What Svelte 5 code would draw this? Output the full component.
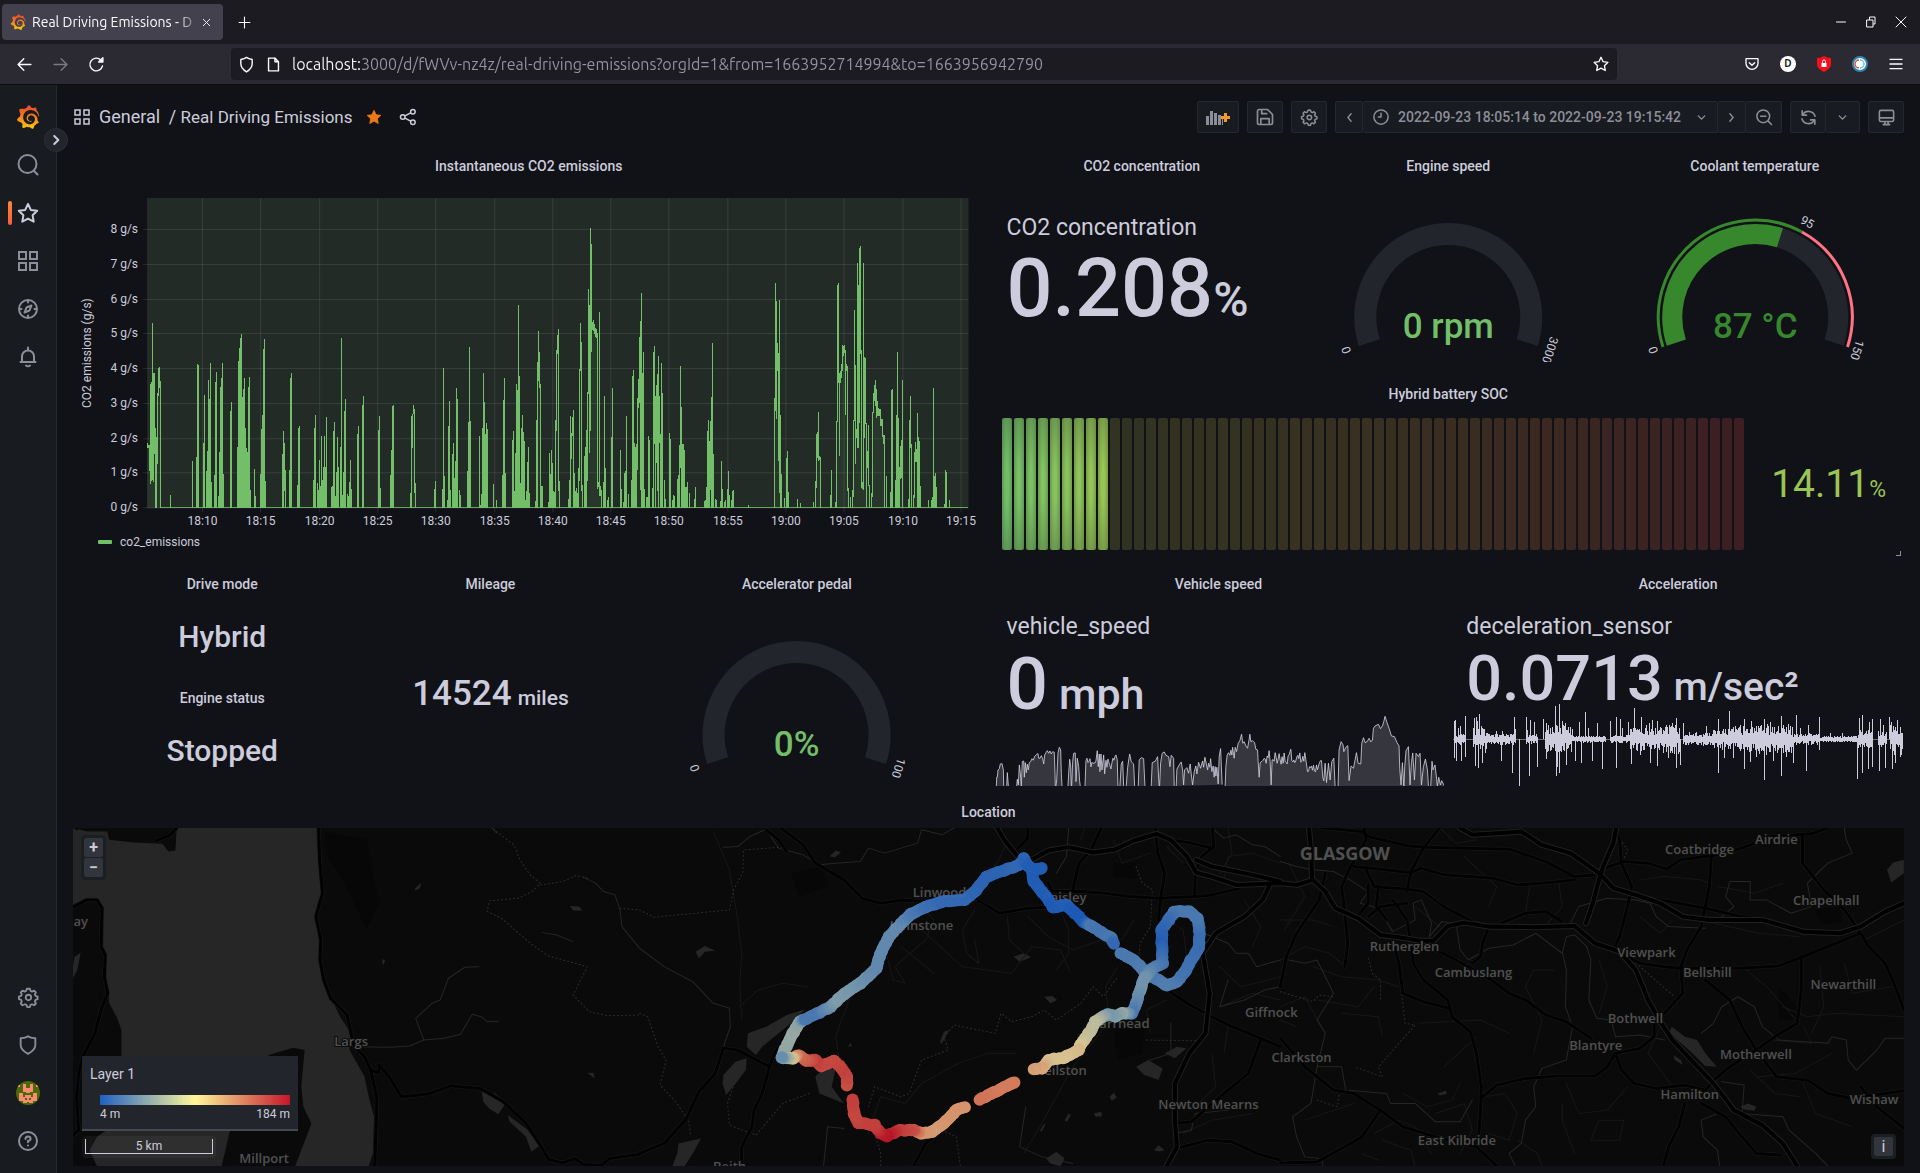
<script>
  const logoPath =
    'M23.02 10.59a8.578 8.578 0 0 0-.862-3.034 8.911 8.911 0 0 0-1.789-2.445c.337-1.342-.413-2.505-.413-2.505-1.292-.08-2.113.4-2.416.62-.052-.02-.102-.044-.154-.064-.22-.089-.446-.172-.677-.247-.231-.073-.47-.14-.711-.197a9.867 9.867 0 0 0-.875-.161C14.557.753 12.94 0 12.94 0c-1.804 1.145-2.147 2.744-2.147 2.744l-.018.093c-.098.029-.2.057-.298.088-.138.042-.275.094-.413.143-.138.055-.275.107-.41.166a8.869 8.869 0 0 0-1.557.87l-.063-.029c-2.497-.955-4.716.195-4.716.195-.203 2.658.996 4.33 1.235 4.636a11.608 11.608 0 0 0-.607 2.635C1.636 12.677.953 15.014.953 15.014c1.926 2.214 4.171 2.351 4.171 2.351.003-.002.006-.002.006-.005.285.509.615.994.986 1.446.156.19.32.371.488.548-.704 2.009.099 3.68.099 3.68 2.144.08 3.553-.937 3.849-1.173a9.784 9.784 0 0 0 3.164.501h.08l.055-.003.107-.002.103-.005.003.002c1.01 1.44 2.788 1.646 2.788 1.646 1.264-1.332 1.337-2.653 1.337-2.94v-.058c0-.02-.003-.039-.003-.06.265-.187.52-.387.758-.6a7.875 7.875 0 0 0 1.415-1.7c1.43.083 2.437-.885 2.437-.885-.236-1.49-1.085-2.216-1.264-2.354l-.018-.013-.016-.013a.217.217 0 0 1-.031-.02c.008-.092.016-.18.02-.27.011-.162.016-.323.016-.48v-.253l-.005-.098-.008-.135a1.891 1.891 0 0 0-.01-.13c-.003-.042-.008-.083-.013-.125l-.016-.124-.018-.122a6.215 6.215 0 0 0-2.032-3.73 6.015 6.015 0 0 0-3.222-1.46 6.292 6.292 0 0 0-.85-.048l-.107.002h-.063l-.044.003-.104.008a4.777 4.777 0 0 0-3.335 1.695c-.332.4-.592.84-.768 1.297a4.594 4.594 0 0 0-.312 1.817l.003.091c.005.055.007.11.013.164a3.615 3.615 0 0 0 .698 1.82 3.53 3.53 0 0 0 1.827 1.282c.33.098.66.14.971.137.039 0 .078 0 .114-.002l.063-.003c.02 0 .041-.003.062-.003.034-.002.065-.007.099-.01.007 0 .018-.003.028-.003l.031-.005.06-.008a1.18 1.18 0 0 0 .112-.02c.036-.008.072-.013.109-.024a2.634 2.634 0 0 0 .914-.415c.028-.02.056-.041.085-.065a.248.248 0 0 0 .039-.35.244.244 0 0 0-.309-.06l-.078.042c-.09.044-.184.083-.283.116a2.476 2.476 0 0 1-.475.096c-.028.003-.054.006-.083.006l-.083.002c-.026 0-.054 0-.08-.002l-.102-.006h-.012l-.024.006c-.016-.003-.031-.003-.044-.006-.031-.002-.06-.007-.091-.01a2.59 2.59 0 0 1-.724-.213 2.557 2.557 0 0 1-.667-.438 2.52 2.52 0 0 1-.805-1.475 2.306 2.306 0 0 1-.029-.444l.006-.122v-.023l.002-.031c.003-.021.003-.04.005-.06a3.163 3.163 0 0 1 1.352-2.29 3.12 3.12 0 0 1 .937-.43 2.946 2.946 0 0 1 .776-.101h.06l.07.002.045.003h.026l.07.005a4.041 4.041 0 0 1 1.635.49 3.94 3.94 0 0 1 1.602 1.662 3.77 3.77 0 0 1 .397 1.414l.005.076.003.075c.002.026.002.05.002.075 0 .024.003.052 0 .07v.065l-.002.073-.008.174a6.195 6.195 0 0 1-.08.639 5.1 5.1 0 0 1-.267.927 5.31 5.31 0 0 1-.624 1.13 5.052 5.052 0 0 1-3.237 2.014 4.82 4.82 0 0 1-.649.066l-.039.003h-.287a6.607 6.607 0 0 1-1.716-.265 6.776 6.776 0 0 1-3.4-2.274 6.75 6.75 0 0 1-.746-1.15 6.616 6.616 0 0 1-.714-2.596l-.005-.083-.002-.02v-.056l-.003-.073v-.096l-.003-.104v-.07l.003-.163c.008-.22.026-.45.054-.678a8.707 8.707 0 0 1 .28-1.355c.128-.444.286-.872.473-1.277a7.04 7.04 0 0 1 1.456-2.1 5.925 5.925 0 0 1 .953-.763c.169-.111.343-.213.524-.306.089-.05.182-.091.273-.135.047-.02.093-.042.138-.062a7.177 7.177 0 0 1 .714-.267l.145-.045c.049-.015.098-.026.148-.041.098-.029.197-.052.296-.076.049-.013.1-.02.15-.033l.15-.032.151-.028.076-.013.075-.01.153-.024c.057-.01.114-.013.171-.023l.169-.021c.036-.003.073-.008.106-.01l.073-.008.036-.003.042-.002c.057-.003.114-.008.171-.01l.086-.006h.023l.037-.003.145-.007a7.999 7.999 0 0 1 1.708.125 7.917 7.917 0 0 1 2.048.68 8.253 8.253 0 0 1 1.672 1.09l.09.077.089.078c.06.052.114.107.171.159.057.052.112.106.166.16.052.055.107.107.159.164a8.671 8.671 0 0 1 1.41 1.978c.012.026.028.052.04.078l.04.078.075.156c.023.051.05.1.07.153l.065.15a8.848 8.848 0 0 1 .45 1.34.19.19 0 0 0 .201.142.186.186 0 0 0 .172-.184c.01-.246.002-.532-.024-.856z';

  const gearPath =
    'M12 2.8l2 .2.8 2.4 1.6.7 2.3-1.1 1.9 1.9-1.1 2.3.7 1.6 2.3.8v2.8l-2.3.8-.7 1.6 1.1 2.3-1.9 1.9-2.3-1.1-1.6.7-.8 2.4h-2.9l-.8-2.4-1.6-.7L6 21l-1.9-1.9 1.1-2.3-.7-1.6-2.4-.8v-2.8l2.4-.8.7-1.6L4.100 6.900 6 5l2.300 1.100 1.600-.700.800-2.400z';

  const starPath = 'M12 3l2.8 5.900 6.400.900-4.600 4.500 1.100 6.400L12 17.600l-5.700 3.100 1.100-6.400L2.800 9.800l6.400-.900z';
  const shieldPath = 'M12 2.500c2.400 1.700 4.900 2.300 8 2v7.500c0 4.200-3.400 7.200-8 9.700-4.600-2.500-8-5.500-8-9.700V4.500c3.100.300 5.600-.300 8-2z';

  // CO2 emissions, one entry per pixel column: x, top and (optionally) bottom, in thirds of a pixel.
  const early = `232 790 800,235 795 800,238 795 870,241 612 908,244 606 900,247 430 898,250 580 902,253 580 820,256 745,259 772,262 640 850,265 565 645,268 562 620,271 603,301 945,367 843,380 830,383 552,386 555,400 790,403 645,410 873,413 813,416 600,419 657,421 549,424 906,433 885,436 606,439 577,446 948,449 815,452 622,455 594,458 549,460 882,481 693,484 667,502 802,505 543,508 505,511 475,514 462,517 650,520 627,523 594,526 745,529 804,532 815,535 620,538 591,541 930,553 867,556 948,572 882,574 748,577 705,580 507,583 478,586 904,638 822,641 753,644 790 930,646 870,658 870,661 595,664 580,683 915,686 745,689 738,730 900,733 744,736 705,742 910,745 930,748 840,751 918,754 768,757 900,760 860,763 768,766 861,769 711,784 921,787 918,790 753,793 727,797 948,799 876,802 771,805 861,811 802,814 475,817 946,820 876,823 694,826 657,832 942,835 948,838 907,841 840,844 928,862 762,865 738,877 675,880 648,925 750,928 708,931 925,961 885,964 811,967 678,970 675,1022 940,1024 708,1027 702 800,1030 675 700,1033 687 935,1036 910,1093 927,1096 904,1117 927,1120 565,1123 888,1132 960,1135 738,1138 663,1141 930,1147 822,1150 790,1153 894,1156 843,1159 625,1162 657,1168 930,1171 946,1192 873,1195 727,1198 502,1201 724,1228 769,1231 975,1234 942,1237 744,1240 579,1243 667,1246 762,1249 730,1252 747,1270 912,1279 960,1297 885,1300 660,1303 594,1306 880,1327 780,1330 753,1333 934,1336 820,1339 612,1342 630,1345 375,1348 588,1351 910,1354 745,1357 705,1360 757,1363 784,1366 960,1369 934,1372 846,1375 802,1378 940,1396 963,1399 720,1402 545,1405 454 600,1408 517 620,1411 612,1414 918,1417 918`;
  const late = `25 966,28 820,31 882,34 810,37 850,40 934,43 936,47 720,49 510 750,52 465 520,55 448 930,58 904,85 958,88 900,91 708,94 760 835,97 710 765,100 690,103 880,106 933,109 924,112 940,115 864,118 568 900,121 430 570,124 487 930,127 915,133 828,136 800,139 750,142 637 900,145 327 640,148 375 815,151 144 750,154 192 512,157 427 447,160 421 449,163 432 460,166 443 468,169 448 472,172 460 925,175 906 918,178 397 945,181 918 945,184 930,190 906,193 648,196 864,202 960,205 951,214 772,217 624,241 810,244 928,250 965,253 878,256 873,259 708,265 942,274 900,277 588,280 570,283 790,286 800,289 792,292 655 868,295 597 680,298 470 665,301 424 928,304 340,307 580,310 517,313 928,319 951,322 951,325 768,328 780,337 925,340 515,343 498 790,346 648,349 615 845,352 583 930,355 528,358 648 785,361 762,364 549,367 640,373 900,376 957,388 760,391 777,397 960,400 945,403 948,412 897,415 885,418 795,421 558 862,424 680,427 793,430 793,433 810,436 920,439 920,442 906,448 940,463 958,466 921,493 963,496 960,499 921,502 752,505 720,508 784,511 722 928,514 652,517 490,520 823,526 957,529 960,541 963,544 843,547 927,553 966,556 960,562 928,565 873,568 945,574 960,577 934,580 930,625 975,703 655,706 309 690,709 362 715,712 490 570,715 520 840,718 360 935,721 705,724 882,733 954,739 835,742 813,745 936,772 957,781 970,820 966,826 903,829 762 920,832 757 830,835 697 840,838 828 838,841 832,871 945,874 870,886 966,889 724,892 316 724,895 309 605,898 580 825,901 574 605,904 552 590,907 495 570,910 498 525,913 495 515,916 510 703,919 552 570,922 558 930,925 925,931 951,937 930,940 720 948,943 390 720,946 555 850,949 747 770,952 249 802,955 316 800,958 204 725,961 198 520,964 510 922,967 906 925,970 249 928,973 532 772,976 535 730,979 730,982 813 860,985 735 915,988 915,994 940,997 695 948,1000 640 697,1003 615 660,1006 600 675,1009 628 712,1012 663 705,1015 685 705,1018 688 705,1021 688 735,1024 718 735,1027 718 767,1030 765 790,1033 766,1039 888,1051 936,1054 630,1057 627,1066 900,1069 705,1072 517,1075 714,1078 861,1081 798 895,1084 780 890,1087 600,1105 958,1108 720,1111 648 800,1114 793,1120 945,1123 816 950,1126 786 843,1129 808 843,1132 700,1135 772,1138 784,1141 918,1165 960,1174 960,1177 950,1180 625,1183 888,1186 880,1189 921,1213 972,1216 870,1219 876,1228 961`;

  const columns = [[early, 70], [late, 540]].flatMap(([text, origin]) =>
    text.split(',').map((entry) => {
      const [x, top, bottom = 982] = entry.trim().split(' ').map(Number);
      return { x: Math.floor(x / 3 + origin), top: Math.round(180 + top / 3), bottom: Math.round(180 + bottom / 3) };
    })
  );
  const emissionPath = columns.map((c) => `M${c.x + 0.5} ${c.top}V${c.bottom + 1}`).join('');
  const emissionFill = columns
    .slice(1)
    .map((c, i) => ({ a: columns[i], c }))
    .filter(({ a, c }) => c.x - a.x < 3)
    .map(({ a, c }) => `M${a.x} ${a.bottom}L${c.x + 1} ${c.bottom}V508H${a.x}z`)
    .join('');

  const yTicks = [0, 1, 2, 3, 4, 5, 6, 7, 8].map((v) => ({ label: `${v} g/s`, y: Math.round(507 - v * 34.75) + 0.5 }));
  const xTicks = ['18:10', '18:15', '18:20', '18:25', '18:30', '18:35', '18:40', '18:45', '18:50', '18:55', '19:00', '19:05', '19:10', '19:15']
    .map((label, i) => ({ label, x: Math.round(202 + i * 58.3) + 0.5 }));

  // Small seeded generator, so that jitter is the same on each load.
  let seed = 11;
  const random = () => ((seed = (seed * 16807) % 2147483647) / 2147483647);

  const jitter = (from, to, step, base, amp) => {
    const out = [];
    for (let x = from; x <= to; x += step) out.push(x, Math.round(base + (random() * 2 - 1) * amp));
    return out.join(' ');
  };
  const speedRuns = [
    '31 288 32 262 34 262 36 240 40 236 43 222 48 221 52 240 53 288',
    '62 288 64 248 67 288',
    '92 288 94 268 97 285 100 225 103 250 106 288 109 215 113 213 115 262 118 218 121 248 124 223 127 240 130 218 134 215 138 206 142 211 146 199 152 193 156 191 158 205 162 205 166 197 170 206 173 222 176 195 180 188 184 182 188 190 192 183 196 192 200 185 205 187 207 250 208 288',
    '210 288 212 270 216 190 220 172 224 180 226 250 228 288',
    '246 288 248 250 251 208 254 230 256 288',
    '257 288 260 215 263 190 268 189 270 275 274 205 278 230 281 275 283 288',
    `297 288 300 212 ${jitter(303, 331, 3, 220, 15)} 334 182 337 230 340 192 342 245 345 192 348 240 353 195 356 252 ${jitter(360, 384, 3, 223, 22)} 387 200 390 195 394 210 396 288`,
    '402 288 406 222 410 214 413 288',
    '421 288 425 232 431 192 436 215 443 222 446 288',
    '457 288 460 210 466 203 473 206 477 288',
    '496 288 499 218 508 214 515 200 518 265 520 288',
    '521 288 524 218 529 190 535 186 540 196 548 200 552 230 556 196 563 205 565 288',
    '571 288 573 238 580 225 586 216 590 240 593 285 596 240 603 233 608 250 613 222 617 262 620 285 625 245 630 228 633 252 638 217 644 235 650 213 653 232 657 202 662 225 665 240 668 220 672 232 674 206 678 245 682 228 685 262 688 230 690 258 693 232 697 282 700 200 704 176 709 284',
    `718 288 720 230 724 195 728 188 732 196 735 181 738 195 740 172 745 205 748 172 752 185 757 160 762 152 767 133 771 160 775 155 780 168 785 175 790 148 792 133 795 155 800 152 806 158 810 178 815 180 817 215 820 262 ${jitter(823, 847, 3, 212, 14)} 850 182 853 215 856 285 859 210 ${jitter(862, 912, 3, 206, 18)} 915 178 ${jitter(918, 960, 3, 203, 15)} 965 245 ${jitter(968, 1008, 3, 228, 18)} 1011 262 1014 273 1018 220 1022 278 1028 220 1033 270 1038 215 1044 205 1048 288`,
    '1057 288 1060 180 1066 155 1072 165 1074 185 1080 172 1086 167 1090 272 1096 228 1103 235 1112 188 1117 220 1125 222 1128 160 1133 143 1138 158 1144 155 1150 145 1155 156 1160 150 1163 115 1168 108 1178 103 1184 116 1190 108 1194 95 1198 79 1204 98 1210 115 1217 138 1226 140 1234 158 1240 168 1242 235 1246 285 1250 218 1254 288',
    '1255 288 1257 230 1261 182 1268 170 1273 285 1277 218 1281 189 1286 270 1291 190 1298 200 1303 190 1307 285 1313 230 1319 207 1325 240 1328 288',
    '1335 288 1339 214 1342 240 1348 225 1355 288 1359 262 1364 285 1368 272 1376 288'
  ];
  const speedPath = speedRuns
    .map((run) => {
      const n = run.split(' ').map(Number);
      let d = '';
      for (let i = 0; i < n.length; i += 2) d += `${i ? 'L' : 'M'}${(985 + n[i] / 3).toFixed(1)} ${(690 + n[i + 1] / 3).toFixed(1)}`;
      return d;
    })
    .join('');

  const brakeUp = '13 92 16 90 26 115 32 108 45 78 73 85 78 82 82 92 87 72 93 108 98 115 104 118 120 138 140 122 157 122 180 138 192 80 197 118 228 80 233 120 240 90 254 97 281 88 288 100 295 105 308 110 315 48 327 42 338 92 347 100 355 112 366 118 387 96 405 66 416 115 441 98 480 94 500 80 510 88 518 115 536 96 552 54 560 120 575 80 590 105 597 98 608 90 622 92 635 115 658 108 668 100 680 85 700 98 740 125 770 108 804 86 838 64 850 110 870 105 882 88 905 92 925 108 942 86 962 95 995 78 1010 112 1038 76 1050 115 1075 105 1107 80 1140 130 1178 128 1228 85 1238 76 1258 95 1268 86 1292 86 1300 105 1318 80 1325 95 1342 90 1352 112 1357 130';
  const brakeDown = '14 205 18 212 34 212 47 200 76 228 85 235 97 220 107 190 155 212 188 250 207 287 237 258 262 232 290 208 318 258 323 230 329 250 350 225 375 213 394 218 428 212 456 238 498 235 545 222 570 195 600 220 621 228 655 205 678 235 690 225 804 250 822 205 850 205 882 238 900 215 920 200 942 270 970 212 993 258 1010 200 1030 218 1070 242 1107 180 1223 267 1236 248 1255 238 1268 232 1287 242 1307 235 1326 237 1336 218 1352 200 1357 178';
  const brakeNoise = [[13, 48, 16], [70, 110, 36], [110, 200, 18], [228, 262, 14], [285, 365, 44], [365, 470, 9], [480, 540, 12], [540, 640, 38], [640, 690, 48], [700, 790, 20], [790, 850, 34], [850, 920, 42], [920, 1030, 50], [1030, 1107, 18], [1107, 1222, 8], [1225, 1270, 28], [1285, 1310, 26], [1322, 1358, 52]];
  const brakeBits = [];
  for (const list of [brakeUp, brakeDown]) {
    const n = list.split(' ').map(Number);
    for (let i = 0; i < n.length; i += 2) brakeBits.push([n[i], 147, n[i + 1]]);
  }
  for (const [from, to, amp] of brakeNoise)
    for (let x = from; x < to; x += 3) brakeBits.push([x, 145 - amp * (0.2 + 0.7 * random()), 150 + amp * (0.2 + 0.7 * random())]);
  const brakePath = brakeBits
    .map(([x, a, b]) => `M${Math.floor(1450 + x / 3) + 0.5} ${(690 + a / 3).toFixed(1)}V${(690 + b / 3).toFixed(1)}`)
    .join('');

  // Arc between two dial angles, measured in degrees clockwise from the top.
  const arc = (from, to, r) => {
    const at = (deg) => {
      const a = (deg * Math.PI) / 180;
      return `${(Math.sin(a) * r).toFixed(2)} ${(-Math.cos(a) * r).toFixed(2)}`;
    };
    return `M${at(from)}A${r} ${r} 0 ${to - from > 180 ? 1 : 0} 1 ${at(to)}`;
  };

  const mix = (stops, t) => {
    const f = Math.min(0.9999, Math.max(0, t)) * (stops.length - 1);
    const i = Math.floor(f);
    return stops[i].map((c, k) => Math.round(c + (stops[i + 1][k] - c) * (f - i))).join(',');
  };
  const cells = Array.from({ length: 62 }, (_, i) => {
    const lit = i < 9;
    const colour = lit
      ? mix([[115, 191, 105], [152, 198, 84]], i / 8)
      : mix([[45, 54, 37], [51, 50, 33], [56, 48, 33], [58, 40, 33], [60, 30, 35]], i / 61);
    return { lit, colour: `rgb(${colour})` };
  });

  // Map sheets: three survey sheets side by side, each with its own grid.
  const px = (sheet, x) => sheet * 640 + x / 2.45 - 74;
  const py = (y) => y / 3 - 8;
  const geo = (sheet, text) => {
    const n = text.split(' ').map(Number);
    let d = '';
    for (let i = 0; i < n.length; i += 2) d += `${i ? 'L' : 'M'}${px(sheet, n[i]).toFixed(1)} ${py(n[i + 1]).toFixed(1)}`;
    return d;
  };

  const water = [
    [0, '181 24 200 30 215 35 265 35 270 60 330 68 400 72 415 95 432 92 435 24 780 24 785 120 792 220 775 290 788 360 788 420 800 490 815 540 835 590 862 640 858 690 895 770 905 830 918 890 915 1000 905 1038 240 1038 222 990 240 950 300 900 300 630 288 590 270 550 268 520 258 460 262 400 255 390 255 260 240 238 215 235 181 255'],
    [0, '181 440 185 410 200 398 192 450 181 475'],
    [0, '1182 815 1215 820 1240 850 1222 882 1200 865 1185 845'], [0, '1245 885 1290 925 1325 975 1303 995 1290 950 1250 905'],
    [0, '1398 258 1420 260 1428 272 1405 272'], [0, '1018 205 1035 188 1030 205 1020 212'], [0, '938 418 945 420 942 434 938 430'], [0, '1440 758 1455 758 1458 775'],
    [1, '265 640 310 620 360 585 405 568 370 610 330 650 300 680 285 705 262 680'], [1, '205 765 235 725 262 715 260 750 235 790 212 825 203 790'],
    [1, '95 970 150 955 130 1000 110 1038 80 1038 92 1000'], [1, '430 770 450 745 480 745 470 800 500 850 470 835 440 820'],
    [1, '137 395 160 378 185 392 160 395 145 415'], [1, '465 110 480 92 493 98 478 112'], [1, '915 410 940 400 958 412 930 425'], [1, '990 530 1010 528 1022 540 1005 550'],
    [1, '735 665 745 635 757 630 745 660 738 672'], [1, '1215 740 1245 720 1280 745 1270 780 1235 765'], [1, '1285 700 1315 680 1338 685 1310 715'],
    [1, '995 1015 1020 995 1040 1015 1030 1038 1005 1030'], [1, '1150 830 1160 818 1168 832 1155 842'], [1, '510 680 516 668 520 678'], [1, '1112 880 1130 875 1132 888 1116 890'],
    [1, '1040 900 1050 880 1055 885 1046 905'], [1, '980 930 990 910 992 915 984 935'], [1, '1258 990 1270 975 1285 990 1272 994'],
    [2, '952 640 958 620 990 650 1020 660 1040 700 1068 740 1040 738 1000 690'], [2, '962 705 980 720 985 735 965 720'], [2, '1485 150 1500 128 1526 120 1526 160 1495 188'],
    [2, '1125 860 1145 850 1165 860 1160 872 1135 868'], [2, '385 820 405 812 408 822 390 826']
  ];
  const cumbrae = [
    [0, '600 800 640 760 660 705 720 683 748 690 740 800 745 860 765 910 740 990 725 1038 545 1038 565 935'],
    [0, '181 24 200 24 190 32']
  ];
  const shade = [
    [0, '800 40 900 60 930 250 900 330 850 200 800 100'], [1, '1160 620 1235 615 1230 700 1170 720'], [1, '1160 130 1215 130 1215 175 1160 170'], [2, '1310 270 1370 260 1375 305 1325 315'],
    [2, '1220 500 1265 560 1270 600 1220 600'], [1, '370 160 450 140 460 200 390 230']
  ];
  const major = [
    [1, '875 24 895 65 925 110 960 120 1000 92 1050 82 1110 98 1160 90 1210 62 1265 42 1300 60 1340 110 1362 158 1400 170 1460 195 1568 190'],
    [1, '1362 120 1400 140 1500 165 1568 185'],
    [2, '0 190 40 195 80 180 110 215 135 265 190 295 245 345 290 352 340 362 375 362 410 318 450 308 510 320 620 322 720 318 770 370 830 395 870 450 900 540 930 605 960 660 1010 725 1060 790 1110 870 1180 915 1230 970 1265 1038'],
    [2, '440 24 470 45 540 40 590 35 640 75 710 100 745 130 780 160 815 205 870 225 930 250 985 290 1050 300 1180 300 1280 335 1370 340 1420 320 1480 275 1526 250'],
    [1, '1540 200 1525 240 1480 290 1410 340 1378 400 1395 520 1385 640 1345 700 1310 790 1310 900 1315 980 1290 1038'],
    [2, '822 24 815 70 790 140 775 200 765 250 748 310'],
    [2, '70 24 75 90 78 180']
  ];
  const roads = [
    [0, '435 24 420 45 385 62'], [0, '181 262 215 240 240 240 252 265 250 380 260 405 258 470 266 520 250 570 235 640 205 710 195 760 190 830 195 930 181 945'],
    [0, '782 24 785 120 792 220 776 290 788 360 786 420 795 480 812 535 852 585 862 640 870 680 895 710 910 750 925 835 920 1038'],
    [0, '910 750 930 758 930 735 955 770 985 830 1050 822 1105 797 1180 806 1235 845 1290 910 1325 975 1345 1018 1380 1028 1410 1015 1430 1033 1475 1035 1495 1015 1568 1002'],
    [1, '345 24 400 75 430 130 500 180 545 235 590 250 640 240 690 245 740 240 820 235 880 280 950 265 1000 262'],
    [1, '310 30 340 60 360 95'], [1, '0 1000 60 970 115 895 145 815 185 760 205 685 240 690 318 740 300 820 280 870 275 920 250 980 248 1038'],
    [1, '318 740 330 700 370 620 400 590'], [1, '670 1038 700 970 730 940'], [1, '1000 190 1010 215 1080 215 1140 220 1200 230 1270 235 1360 230 1400 225 1470 205'],
    [1, '1130 24 1105 90 1075 130 1060 210'], [1, '1262 24 1268 100 1285 160 1275 235 1270 300'], [1, '1402 24 1405 80 1375 110 1360 160 1358 230'],
    [1, '1280 500 1340 550 1400 590 1450 620 1520 655 1568 680'], [1, '1315 985 1390 960 1450 965 1510 1000 1568 1020'], [1, '1310 910 1350 905 1420 830 1490 760 1520 660'],
    [1, '950 24 950 55 918 95'], [1, '1300 60 1350 70 1400 85'],
    [2, '100 24 200 35 215 50 310 78 355 82 560 88 650 125 720 170 775 165'], [2, '180 140 320 158 345 145 400 165 520 175 580 195 660 188 720 180'],
    [2, '205 24 210 60 170 145 150 200 158 280 165 370 158 440'], [2, '210 150 230 200 310 208 350 215 400 260 470 305 520 320'], [2, '390 24 350 85 320 155 310 215'],
    [2, '110 160 95 240 40 340 15 410 0 500'], [2, '275 240 310 300 320 370 325 430 350 480 410 540 420 590 465 635 480 700 492 800 490 870 485 950'],
    [2, '275 360 290 430 300 520 350 545 412 565'], [2, '380 390 430 420 510 475 560 520 600 540 650 585 700 605 760 655'],
    [2, '510 320 495 370 490 410 470 430'], [2, '540 310 600 280 650 275 690 305'], [2, '820 24 830 60 835 130 860 200 850 260 830 350 815 390'],
    [2, '780 150 840 125 900 130 945 148 980 120 1070 105 1130 85 1200 50 1300 42 1340 24'], [2, '1055 110 1050 200 1030 320 995 390 980 440 985 520 940 580'],
    [2, '1278 50 1278 130 1330 210 1380 270 1410 320 1440 380 1480 430 1505 500 1526 570'], [2, '830 400 880 430 940 440 980 445 1120 445 1220 438 1300 400 1400 350 1420 340'],
    [2, '1275 410 1275 510 1265 610 1210 650 1165 690 1100 740 1060 780 1035 820'], [2, '1040 480 1100 540 1130 620 1165 690 1215 770 1290 780 1340 820 1400 835 1526 812'],
    [2, '0 655 60 740 130 810 180 820 250 875 300 920 380 950 480 980 530 1038'], [2, '0 1028 90 1025 150 985 200 950 225 905 245 870'],
    [2, '495 830 530 795 600 775 680 768 770 768 800 740 820 700 880 685 915 650 915 600'], [2, '820 700 835 750 865 790 920 805 990 795 1040 810'],
    [2, '990 850 975 920 950 980 938 1038'], [2, '1030 850 1090 890 1130 950 1165 1000 1225 1005'], [2, '1420 800 1460 860 1526 925'], [2, '860 225 930 240 1040 265 1130 290 1190 300'],
    [2, '185 295 215 250 215 195'], [2, '215 290 245 260 310 250'], [2, '240 200 235 260 260 300']
  ];
  const minor = [
    [1, '180 35 220 150 240 300 250 400 245 500 250 600'], [1, '245 560 290 510 350 490 410 500'], [1, '520 520 500 580 480 650 490 730'],
    [1, '600 380 620 480 650 490 625 440 700 360 720 300 690 260'], [1, '640 380 720 460'], [1, '690 330 790 440 910 460 960 380 1030 390 1055 460'],
    [1, '820 360 830 430 800 400 790 330 820 270'], [1, '900 290 905 360 940 400'], [1, '950 290 1000 350 1060 390 1130 360 1160 380'], [1, '1030 270 1050 330 1050 400 1020 450'],
    [1, '1170 440 1140 500 1150 600 1120 650 1060 740 1020 830 970 940 940 1000'], [1, '570 900 590 830 650 850 690 790 780 730 850 700 920 700'], [1, '900 60 880 120 840 180'],
    [1, '1090 24 1080 60'], [1, '1160 60 1180 130 1250 100'], [1, '1290 80 1330 130'], [1, '1430 180 1440 110 1500 100 1568 130'], [1, '1290 300 1330 330 1340 420'],
    [1, '1420 440 1470 500 1540 480 1568 470'], [1, '1420 560 1500 520 1568 540'], [1, '1430 700 1440 620'], [1, '1440 24 1450 100 1420 160'], [1, '1480 240 1520 320 1500 380'],
    [1, '1210 300 1180 360 1120 330'], [1, '1290 540 1240 570 1250 640'], [1, '1330 940 1400 900 1500 880'], [1, '1400 700 1410 800 1350 870'],
    [2, '0 300 80 300 130 320'], [2, '20 130 60 230 10 330'], [2, '0 420 60 380 120 400 160 440'], [2, '80 440 150 470 240 480 290 500'], [2, '90 540 190 560 230 500'], [2, '150 580 240 590 250 650'],
    [2, '0 560 60 530 110 640'], [2, '330 260 390 320'], [2, '390 24 430 70 480 60'], [2, '450 110 530 200 510 260'], [2, '610 200 600 280'], [2, '680 180 690 260 640 330'],
    [2, '340 610 490 600 560 640'], [2, '400 740 480 650'], [2, '620 700 640 600 600 500 620 450 670 450'], [2, '690 850 690 900 720 1000'], [2, '700 790 730 880 800 870 850 800'],
    [2, '780 420 800 500 780 580'], [2, '880 290 930 340 960 300'], [2, '880 180 940 170 1030 180 1050 190'], [2, '1070 200 1160 220 1230 190'], [2, '1060 310 1170 340 1270 350'],
    [2, '1140 450 1190 500 1270 610'], [2, '1320 440 1330 560 1300 640'], [2, '1380 430 1400 520 1500 500'], [2, '1230 560 1290 590 1360 580 1526 590'], [2, '1280 620 1300 670 1200 660'],
    [2, '930 620 900 700 960 800'], [2, '1150 750 1210 820 1270 830'], [2, '1170 770 1260 760 1350 700'], [2, '1280 790 1310 880 1400 920'], [2, '1430 360 1526 300'],
    [2, '230 940 290 900 330 920 370 1000'], [2, '380 880 450 850 470 930 440 1000'], [2, '500 830 550 820 580 880 560 960 510 940'], [2, '300 820 360 860 420 840 440 790'],
    [2, '250 960 320 990 330 1038'], [2, '580 960 630 1000 640 1038'], [2, '200 1000 240 1020'], [2, '780 900 760 960 830 960 840 900 780 900'], [2, '60 900 180 850'], [2, '40 620 0 600']
  ];
  const rivers = [
    [0, '1040 660 1020 595 1060 550 1080 540 1100 475 1140 442 1175 440'], [0, '875 680 960 682 1005 678 1040 660 1090 655 1130 643 1158 583 1180 590 1195 605 1223 604'],
    [0, '1430 172 1460 190 1480 215 1508 225 1520 270 1525 320 1568 385'], [0, '1330 338 1365 345 1405 365'], [0, '1205 24 1210 28 1218 40'],
    [1, '0 385 60 440 130 485 180 550 220 565 222 620 205 680'], [1, '205 82 240 80 270 50 310 28 340 85 400 105 440 135 480 130 540 125 560 85 600 100 640 85 680 70 690 30 740 45 770 24'],
    [1, '1400 24 1430 55 1460 45 1500 75 1530 80 1568 110'], [1, '1050 24 1045 110 1020 160'], [1, '1380 340 1440 370 1460 400 1490 400 1510 440 1568 420'],
    [1, '1440 480 1420 560 1480 540 1530 510 1568 500'], [1, '1300 610 1300 700 1250 720'], [1, '1310 940 1350 930 1360 880 1440 870'], [1, '945 860 930 980 985 1010 1060 1030'],
    [1, '450 1038 460 920 500 925'],
    [2, '0 125 40 140 80 150 130 155 170 180 215 215 195 250 240 265 275 335 330 300 325 250 345 240 370 310 365 350 395 305 430 310 440 390 460 420 510 385 570 375 625 340 690 400 700 350 720 345 750 380 760 420 755 540 775 595 810 600 820 650 880 645 940 660'],
    [2, '690 395 700 450 698 560 715 620 700 720 640 745 620 800 625 860 600 900 590 970 560 1000 575 1038'], [2, '710 310 730 260 800 235 870 240 905 250 920 290 950 320 1040 325'],
    [2, '1380 24 1385 60 1400 100 1340 130 1290 190 1300 260 1250 280 1190 240 1150 240 1150 185 1100 185 1090 230 1110 260 1080 290'],
    [2, '1030 640 1060 610 1080 560 1120 530 1160 560 1180 620 1220 660 1340 670 1350 650 1385 660 1390 720 1410 750 1460 690 1480 655 1526 655'],
    [2, '20 420 60 430 90 420 130 520 90 600 110 640 90 740 150 740 160 810 260 820 270 850 330 850 380 905 440 905 470 840'],
    [2, '90 740 75 850 30 890 40 950 60 1010 100 1015 105 1038'], [2, '1080 785 1135 795 1130 880 1230 890 1245 930 1310 1000 1340 1038'], [2, '1070 880 1030 900 1035 950 1070 990 1075 1038']
  ];
  const dotted = [
    [0, '1210 28 1260 75 1275 120 1300 165 1325 190 1305 215 1270 235 1200 243 1195 275 1230 295 1300 370 1345 408 1440 440 1405 525 1445 575 1490 587 1568 585'],
    [0, '1325 195 1380 185 1412 167 1440 175'], [0, '1520 265 1568 270'],
    [1, '0 270 35 292 220 270 230 210 252 160 255 90 350 82'], [1, '0 580 20 590 45 680 65 720 50 795 85 840 120 900 125 950'],
    [1, '415 820 350 850 285 945 220 915 215 850 235 780'], [1, '560 860 575 800 640 830 660 820 690 720 755 690 745 650 770 615 870 640 885 580 910 605 960 590 990 570 1020 600 1080 550 1110 500 1135 530 1170 470'],
    [1, '1240 660 1360 662'], [1, '1215 140 1230 190 1255 210 1250 320 1225 370 1220 430'], [1, '575 940 590 1000 590 1038'], [1, '740 930 775 950 785 1038'],
    [2, '0 515 80 545 95 525 130 530'], [2, '215 415 225 460 245 480 245 540'], [2, '295 500 305 610 330 615 240 740 250 770 180 740'], [2, '825 50 850 90 840 120'], [2, '870 430 965 530'],
    [2, '90 840 140 860 145 810']
  ];
  const towns = [
    [0, 200, 305, 'ay'], [0, 862, 666, 'Largs'], [0, 649, 1015, 'Millport'], [1, 220, 1040, 'Beith'], [1, 734, 218, 'Linwood'], [1, 690, 319, 'Johnstone'], [1, 1040, 234, 'Paisley'],
    [1, 1176, 613, 'Barrhead'], [1, 1030, 752, 'Neilston'], [1, 1392, 854, 'Newton Mearns'], [1, 1546, 580, 'Giffnock'], [2, 52, 714, 'Clarkston'],
    [2, 304, 380, 'Rutherglen'], [2, 473, 459, 'Cambuslang'], [2, 896, 400, 'Viewpark'], [2, 1026, 90, 'Coatbridge'], [2, 1214, 60, 'Airdrie'], [2, 1336, 242, 'Chapelhall'],
    [2, 1045, 459, 'Bellshill'], [2, 1378, 494, 'Newarthill'], [2, 869, 598, 'Bothwell'], [2, 772, 677, 'Blantyre'], [2, 1164, 704, 'Motherwell'], [2, 1002, 826, 'Hamilton'],
    [2, 1453, 839, 'Wishaw'], [2, 432, 962, 'East Kilbride']
  ];

  // Recorded drive: x, y and height on a 0-100 scale.
  const drive = [
    '348 713 20 355 690 30 375 640 33 393 605 30 405 598 12 440 578 12 468 560 20 485 538 26 500 523 25 540 490 22 580 445 18 587 410 18 610 350 18 640 310 18 665 282 13 700 262 9 740 245 6 795 240 6 820 215 5 850 170 4 890 152 4 930 135 6 941 115 4 945 130 3 960 150 1 965 185 1 985 215 2 1000 240 1 1012 262 0 1045 255 2 1065 280 0 1088 307 0 1105 318 12 1130 338 10 1155 355 12 1160 372 6',
    '960 150 1 985 146 1',
    '1176 400 12 1210 420 12 1240 460 14 1270 480 12 1290 497 14 1315 485 13 1335 455 10 1350 420 9 1368 385 8 1370 330 8 1365 295 12 1345 275 12 1308 275 12 1295 300 8 1278 330 5 1278 370 2 1280 430 10 1255 445 14 1235 475 22 1225 510 22 1215 550 18 1205 580 12 1180 580 32 1165 590 26 1145 583 24 1115 605 42 1105 630 42 1078 675 48 1075 690 56 1040 712 52 1000 720 52 985 745 62 965 748 64',
    '917 786 76 870 815 76 833 838 78', '795 860 68 775 870 68 745 910 68 715 935 65 690 940 68 670 930 86 635 930 90 605 948 100 590 940 98 575 915 90 535 908 90 525 880 88 522 838 90',
    '508 795 86 508 770 88 495 745 90 475 722 88 445 738 88 430 720 90 408 722 84 390 705 80 375 715 55 348 713 20'
  ];
  const heights = [[31, 96, 196], [134, 168, 184], [232, 215, 160], [230, 138, 100], [196, 22, 42]];
  const dots = drive.flatMap((text) => {
    const n = text.split(' ').map(Number);
    const out = [];
    for (let i = 0; i + 5 < n.length; i += 3) {
      const [x1, y1, h1, x2, y2, h2] = [px(1, n[i]), py(n[i + 1]), n[i + 2], px(1, n[i + 3]), py(n[i + 4]), n[i + 5]];
      const steps = Math.max(1, Math.round(Math.hypot(x2 - x1, y2 - y1) / 2));
      for (let s = 0; s <= steps; s++) {
        const f = s / steps;
        out.push({
          x: (x1 + (x2 - x1) * f + random() - 0.5).toFixed(1),
          y: (y1 + (y2 - y1) * f + random() - 0.5).toFixed(1),
          c: `rgb(${mix(heights, (h1 + (h2 - h1) * f) / 100)})`
        });
      }
    }
    return out;
  });

  let address = 'localhost:3000/d/fWVv-nz4z/real-driving-emissions?orgId=1&from=1663952714994&to=1663956942790';
</script>

{#snippet logo(id, size)}
  <svg width={size} height={size} viewBox="0 0 24 24" aria-hidden="true">
    <defs>
      <linearGradient {id} x1="0" y1="0" x2="0" y2="1">
        <stop offset="0" stop-color="#f0442a" /><stop offset=".45" stop-color="#f37a24" /><stop offset="1" stop-color="#fbca0a" />
      </linearGradient>
    </defs>
    <path d={logoPath} fill="url(#{id})" />
  </svg>
{/snippet}

{#snippet line(d, size = 24, width = 2)}
  <svg width={size} height={size} viewBox="0 0 24 24" fill="none" stroke="currentColor" stroke-width={width} stroke-linecap="round" stroke-linejoin="round" aria-hidden="true"><path {d} /></svg>
{/snippet}

{#snippet gauge(label, max, value, tone)}
  <svg class="gauge" viewBox="-149 -135 298 180" role="img" aria-label={label}>
    {#if tone === 'hot'}
      <path d={arc(-108, 108, 83)} class="dial thin" />
      <path d={arc(-108, 17.3, 83)} class="dial thin filled" />
      <path d={arc(-108, 28.8, 97)} class="ring" />
      <path d={arc(28.8, 108, 97)} class="ring alert" />
      <text transform="rotate(28.8) translate(0 -104)">95</text>
    {:else}
      <path d={arc(-108, 108, 83)} class="dial" />
    {/if}
    <text transform="rotate(-108) translate(0 -103)">0</text>
    <text transform="rotate(108) translate(0 -103)">{max}</text>
    <text class={['reading', tone]} y="21">{value}</text>
  </svg>
{/snippet}

<div class="browser">
  <div class="tabs">
    <div class="tab">
      {@render logo('tab-logo', 16)}
      <span class="tab-title">Real Driving Emissions - D</span>
      <button aria-label="Close tab">{@render line('M5 5l14 14M19 5L5 19', 11, 2)}</button>
    </div>
    <button class="new-tab" aria-label="New tab">{@render line('M12 2v20M2 12h20', 13, 2)}</button>
    <div class="window">
      <button aria-label="Minimise">{@render line('M3 12h18', 12, 2)}</button>
      <button aria-label="Restore">{@render line('M4 8h12v14H4zM9 7V2h11v14h-3', 12, 2)}</button>
      <button aria-label="Close window">{@render line('M2 2l20 20M22 2L2 22', 12, 2)}</button>
    </div>
  </div>
  <div class="toolbar">
    <button aria-label="Back">{@render line('M21 12H3M11 4l-8 8 8 8', 17, 2)}</button>
    <button class="dim" aria-label="Forward">{@render line('M3 12h18M13 4l8 8-8 8', 17, 2)}</button>
    <button aria-label="Reload">{@render line('M20.500 14a9 9 0 1 1-2.300-8.300L21 8.500M21 2.500v6h-6z', 17, 2)}</button>
    <div class="address">
      {@render line('M12 2c2.500 2 5 2.500 8 3v6c0 5-4 9-8 11.500C8 20 4 16 4 11V5c3-.500 5.500-1 8-3z', 17, 2)}
      {@render line('M5 3h9l5 5v13H5zM14 3v5h5z', 17, 2)}
      <input aria-label="Address" bind:value={address} spellcheck="false" />
      <button aria-label="Bookmark">{@render line(starPath, 18, 1.8)}</button>
    </div>
    <div class="extensions">
      <button aria-label="Pocket">{@render line('M3 4h18v7a9 9 0 0 1-18 0zM8 10l4 4 4-4', 16, 2)}</button>
      <button aria-label="Reader"><span class="badge-d">D</span></button>
      <button aria-label="Blocker">
        <svg width="16" height="16" viewBox="0 0 16 16" aria-hidden="true"><path d="M8 0c2 1.300 4 2 7 2v6c0 4-4 6.500-7 8-3-1.500-7-4-7-8V2c3 0 5-.700 7-2z" fill="#f5101c" /><path d="M5.500 7h5v4h-5z" fill="#fff" /><path d="M6.500 7V5.500a1.500 1.500 0 0 1 3 0V7" fill="none" stroke="#fff" /></svg>
      </button>
      <button aria-label="Tracker">
        <svg width="16" height="16" viewBox="0 0 16 16" aria-hidden="true"><circle cx="8" cy="8" r="7" fill="#fff" stroke="#2a86b8" stroke-width="2" /><path d="M8 4a4 4 0 0 1 0 8" fill="none" stroke="#7cb9dc" stroke-width="1.500" /><path d="M7 4a4 4 0 0 0 0 8" fill="none" stroke="#e0542f" stroke-width="1.500" /></svg>
      </button>
      <button aria-label="Menu">{@render line('M3 5h18M3 12h18M3 19h18', 16, 2)}</button>
    </div>
  </div>
</div>

<div class="app">
  <nav class="side" aria-label="Main">
    <a href="#home" aria-label="Home">{@render logo('side-logo', 24)}</a>
    <a href="#search" aria-label="Search">{@render line('M21.500 21.500l-4-4M11.500 2a9 9 0 1 0 0 18 9 9 0 0 0 0-18z')}</a>
    <a href="#starred" aria-label="Starred" class="active">{@render line(starPath)}</a>
    <a href="#dashboards" aria-label="Dashboards">
      <svg width="20" height="20" viewBox="0 0 20 20" fill="none" stroke="currentColor" stroke-width="2" aria-hidden="true"><path d="M1 1h7v7H1zM12 1h7v7h-7zM1 12h7v7H1zM12 12h7v7h-7z" /></svg>
    </a>
    <a href="#explore" aria-label="Explore">{@render line('M12 3a9 9 0 1 0 0 18 9 9 0 0 0 0-18zM12 3v2.500M12 18.500V21M3 12h2.500M18.500 12H21M15.500 8.500l-2 5-5 2 2-5z')}</a>
    <a href="#alerting" aria-label="Alerting">{@render line('M12 2.500V5M6 17v-5.500a6 6 0 0 1 12 0V17zM4.500 17h15M10 20.500q2 1.500 4 0')}</a>
    <span class="spring"></span>
    <a href="#config" aria-label="Configuration">{@render line(gearPath + 'M12.500 9.500a3 3 0 1 0 0 6 3 3 0 0 0 0-6z', 22)}</a>
    <a href="#admin" aria-label="Server admin">{@render line(shieldPath, 22)}</a>
    <a href="#profile" aria-label="Profile">
      <svg width="24" height="24" viewBox="0 0 24 24" aria-hidden="true"><clipPath id="avatar"><circle cx="12" cy="12" r="12" /></clipPath><g clip-path="url(#avatar)"><path d="M0 0h24v24H0z" fill="#4a6a08" /><path d="M7 3h3v4h4V3h3v8h-3v1h-4v-1H7zM3 12h4v4h2v3h2v-2H9v-3h6v3h-2v2h2v-3h2v-4h4v8h-4v2h-4v-1h-2v1H7v-2H3zM2 4h2v2H2zM20 4h2v2h-2z" fill="#fb8a72" fill-rule="evenodd" /></g></svg>
    </a>
    <a href="#help" aria-label="Help">{@render line('M12 3a9 9 0 1 0 0 18 9 9 0 0 0 0-18zM9.500 10q0-2.500 2.500-2.500t2.500 2.200-2.500 2.100v1.400M12 16.500v.100')}</a>
    <button class="expand" aria-label="Expand menu">{@render line('M9 5l7 7-7 7', 14, 3.5)}</button>
  </nav>

  <main>
    <header>
      <svg class="apps" width="16" height="16" viewBox="0 0 16 16" fill="none" stroke="currentColor" stroke-width="1.500" aria-hidden="true"><path d="M1 1h5v5H1zM10 1h5v5h-5zM1 10h5v5H1zM10 10h5v5h-5z" /></svg>
      <h1><a href="#general">General</a> <span>/ <a href="#dashboard">Real Driving Emissions</a></span></h1>
      <button class="fav" aria-label="Unstar"><svg width="18" height="18" viewBox="0 0 24 24" aria-hidden="true"><path d={starPath} fill="#eb7b18" stroke="#eb7b18" stroke-linejoin="round" /></svg></button>
      <button class="share" aria-label="Share">{@render line('M15.500 6.500l-7.500 4M8 13.500l7.500 4M18.500 2a3 3 0 1 0 0 6.100 3 3 0 0 0 0-6.100zM5 9a3 3 0 1 0 0 6.100A3 3 0 0 0 5 9zM18.500 16a3 3 0 1 0 0 6.100 3 3 0 0 0 0-6.100z', 18, 2)}</button>
      <div class="tools">
        <button class="tool wide" aria-label="Add panel">
          <svg width="26" height="18" viewBox="0 0 26 18" aria-hidden="true"><path d="M1 8h3v9H1zM5 3h3v14H5zM9 5h3v12H9zM13 7h3v10h-3zM17 11h1v6h-1z" fill="#8e8e9a" /><path d="M16 9.500h9M20.500 5v9" stroke="#f5952a" stroke-width="3" /></svg>
        </button>
        <button class="tool" aria-label="Save dashboard">{@render line('M3 5a2 2 0 0 1 2-2h10l6 6v10a2 2 0 0 1-2 2H5a2 2 0 0 1-2-2zM8 3v5h6M7 21v-7h10v7', 20, 2)}</button>
        <button class="tool" aria-label="Dashboard settings">{@render line(gearPath + 'M12.500 9.500a3 3 0 1 0 0 6 3 3 0 0 0 0-6z', 18, 2)}</button>
        <div class="group">
          <button class="tool narrow" aria-label="Earlier">{@render line('M15 5l-6 7 6 7', 13, 2.5)}</button>
          <button class="tool range">
            {@render line('M12 2.500a9.500 9.500 0 1 0 0 19 9.500 9.500 0 0 0 0-19zM12 7v5H8.500', 18, 2)}
            <span>2022-09-23 18:05:14 to 2022-09-23 19:15:42</span>
            {@render line('M6 9l6 6 6-6', 13, 2.5)}
          </button>
          <button class="tool narrow" aria-label="Later">{@render line('M9 5l6 7-6 7', 13, 2.5)}</button>
          <button class="tool" aria-label="Zoom out">{@render line('M22 22l-4.500-4.500M11 2.500a8.500 8.500 0 1 0 0 17 8.500 8.500 0 0 0 0-17zM7.500 11h7', 18, 2)}</button>
        </div>
        <div class="group">
          <button class="tool" aria-label="Refresh">{@render line('M4 3.500V9h5.500M4.500 9a8.500 8.500 0 0 1 15.800 1.500M20 20.500V15h-5.500M19.500 15A8.500 8.500 0 0 1 3.700 13.500', 19, 2)}</button>
          <button class="tool slim" aria-label="Refresh interval">{@render line('M6 9l6 6 6-6', 13, 2.5)}</button>
        </div>
        <button class="tool" aria-label="Cycle view mode">{@render line('M5 3h14a2 2 0 0 1 2 2v10a2 2 0 0 1-2 2H5a2 2 0 0 1-2-2V5a2 2 0 0 1 2-2zM3 12.500h18M10 17v4M14 17v4M8 21h8', 19, 2)}</button>
      </div>
    </header>

    <div class="grid">
      <section class="panel emissions">
        <h2>Instantaneous CO2 emissions</h2>
        <svg class="chart" viewBox="73 182 911 348" role="img" aria-label="CO2 emissions in grams per second">
          <path d="M147 198h821v310h-821z" class="plot" />
          {#each yTicks as tick}
            <path d="M143 {tick.y}H968" class="gridline" />
            <text x="138" y={tick.y + 3} text-anchor="end">{tick.label}</text>
          {/each}
          {#each xTicks as tick}
            <path d="M{tick.x} 198V512" class="gridline" />
            <text x={tick.x} y="525" text-anchor="middle">{tick.label}</text>
          {/each}
          <text transform="translate(91 353) rotate(-90)" text-anchor="middle">CO2 emissions (g/s)</text>
          <path d={emissionFill} class="area" />
          <path d="M160 507.500H968" class="series base" />
          <path d={emissionPath} class="series" />
        </svg>
        <div class="legend"><i></i>co2_emissions</div>
      </section>

      <section class="panel concentration">
        <h2>CO2 concentration</h2>
        <div class="stat tall"><p class="name">CO2 concentration</p><p class="huge">0.208<small>%</small></p></div>
      </section>

      <section class="panel engine"><h2>Engine speed</h2>{@render gauge('Engine speed', '3000', '0 rpm', 'ok')}</section>
      <section class="panel coolant"><h2>Coolant temperature</h2>{@render gauge('Coolant temperature', '150', '87 °C', 'hot')}</section>

      <section class="panel battery">
        <h2>Hybrid battery SOC</h2>
        <div class="bar">
          <div class="cells">
            {#each cells as cell}<i class:lit={cell.lit} style:background-color={cell.colour}></i>{/each}
          </div>
          <p>14.11<small>%</small></p>
        </div>
        <span class="resize"></span>
      </section>

      <section class="panel mode"><h2>Drive mode</h2><p class="state">Hybrid</p></section>
      <section class="panel status"><h2>Engine status</h2><p class="state">Stopped</p></section>
      <section class="panel mileage"><h2>Mileage</h2><p class="state miles">14524 <small>miles</small></p></section>
      <section class="panel pedal"><h2>Accelerator pedal</h2>{@render gauge('Accelerator pedal', '100', '0%', 'ok')}</section>

      <section class="panel speed">
        <h2>Vehicle speed</h2>
        <div class="spark">
          <svg viewBox="992 700 452 86" aria-hidden="true"><path d={speedPath} class="speed-area" /></svg>
          <div class="stat"><p class="name">vehicle_speed</p><p class="large">0<small>mph</small></p></div>
        </div>
      </section>

      <section class="panel accel">
        <h2>Acceleration</h2>
        <div class="spark">
          <svg viewBox="1452 700 452 86" aria-hidden="true"><path d="M1453 739.500H1903" class="brake zero" /><path d={brakePath} class="brake" /></svg>
          <div class="stat"><p class="name">deceleration_sensor</p><p class="medium">0.0713<small>m/sec²</small></p></div>
        </div>
      </section>

      <section class="panel location">
        <h2>Location</h2>
        <div class="map">
          <svg viewBox="0 0 1829 338" preserveAspectRatio="xMidYMid slice" role="img" aria-label="Drive route near Glasgow">
            {#each shade as [sheet, d]}<path d={geo(sheet, d)} class="shade" />{/each}
            {#each water as [sheet, d]}<path d={geo(sheet, d)} class="water" />{/each}
            {#each cumbrae as [sheet, d]}<path d={geo(sheet, d)} class="land" />{/each}
            {#each minor as [sheet, d]}<path d={geo(sheet, d)} class="minor" />{/each}
            {#each rivers as [sheet, d]}<path d={geo(sheet, d)} class="river" />{/each}
            {#each dotted as [sheet, d]}<path d={geo(sheet, d)} class="dotted" />{/each}
            {#each roads as [sheet, d]}<path d={geo(sheet, d)} class="casing" />{/each}
            {#each roads as [sheet, d]}<path d={geo(sheet, d)} class="road" />{/each}
            {#each major as [sheet, d]}<path d={geo(sheet, d)} class="casing big" />{/each}
            {#each major as [sheet, d]}<path d={geo(sheet, d)} class="road big" />{/each}
            {#each towns as [sheet, x, y, name]}<text x={px(sheet, x)} y={py(y) + 4}>{name}</text>{/each}
            <text class="city" x={px(2, 158)} y={py(102) + 6}>GLASGOW</text>
            <g class="drive">
              {#each dots as dot}<circle cx={dot.x} cy={dot.y} r="6" fill={dot.c} />{/each}
            </g>
          </svg>
          <div class="zoom">
            <button aria-label="Zoom in">+</button>
            <button aria-label="Zoom out of map">−</button>
          </div>
          <div class="layers">
            <p>Layer 1</p>
            <div class="ramp"></div>
            <div class="ends"><span>4 m</span><span>184 m</span></div>
          </div>
          <div class="scale"><span>5 km</span></div>
          <div class="info"><button aria-label="Attributions">i</button></div>
        </div>
      </section>
    </div>
  </main>
</div>

<style>
  :global(body) { margin: 0; background: #111217; }
  :global(#app) { min-height: 100vh; display: flex; flex-direction: column; font-family: Roboto, sans-serif; font-size: 14px; color: #ccccdc; }
  h1, h2, p { margin: 0; font-weight: 400; }
  button { margin: 0; padding: 0; border: 0; background: none; color: inherit; font: inherit; display: flex; align-items: center; justify-content: center; }
  a { color: inherit; text-decoration: none; }
  svg { display: block; flex: none; }

  .browser { font-family: Ubuntu, "Noto Sans", sans-serif; color: #fbfbfe; border-bottom: 1px solid #0c0c0d; }
  .tabs { height: 44px; display: flex; align-items: center; background: #1c1b22; }
  .tab { box-sizing: border-box; width: 221px; height: 36px; margin-left: 2px; padding: 0 11px 0 8px; display: flex; align-items: center; background: #42414d; border-radius: 4px; }
  .tab-title { flex: 1; min-width: 0; margin-left: 6px; font-size: 14px; line-height: 20px; overflow: hidden; white-space: nowrap; mask-image: linear-gradient(to left, transparent, #000 24px); }
  .new-tab { width: 42px; height: 36px; }
  .window { margin-left: auto; margin-right: 13px; display: flex; gap: 18px; }
  .toolbar { height: 40px; display: flex; align-items: center; background: #2b2a33; }
  .toolbar > button { width: 36px; height: 32px; }
  .toolbar > button:first-child { margin-left: 6px; }
  .dim { color: #7b7a82; }
  .address { box-sizing: border-box; flex: 1; height: 32px; margin-left: 117px; padding: 0 7px; display: flex; align-items: center; gap: 10px; background: #1c1b22; border-radius: 4px; }
  .address input { flex: 1; min-width: 0; border: 0; padding: 0; outline: 0; font: inherit; font-size: 16px; color: transparent; background: linear-gradient(to right, #fbfbfe 69px, #96959e 69px); background-clip: text; -webkit-background-clip: text; }
  .extensions { display: flex; gap: 20px; margin: 0 16px 0 127px; }
  .badge-d { width: 16px; height: 16px; border-radius: 8px; background: #fff; color: #1c1b22; font-size: 10px; font-weight: 700; line-height: 16px; text-align: center; }

  .app { flex: 1; display: flex; }
  .side { position: relative; flex: none; width: 56px; padding: 8px 0; display: flex; flex-direction: column; background: #181b1f; border-right: 1px solid #24272d; color: #8e8e9a; }
  .side a { position: relative; height: 48px; display: flex; align-items: center; justify-content: center; }
  .side .active { color: #ccccdc; }
  .active::before { content: ''; position: absolute; left: 8px; top: 12px; width: 4px; height: 24px; border-radius: 2px; background: linear-gradient(#ff8833, #f55f3e); }
  .spring { flex: 1; }
  .expand { position: absolute; left: 44px; top: 43px; box-sizing: border-box; width: 24px; height: 24px; border: 1px solid #2c2f36; border-radius: 12px; background: #22252b; color: #ccccdc; }
  main { flex: 1; min-width: 0; padding: 0 16px; }
  header { height: 32px; padding: 16px 0 19px 1px; display: flex; align-items: center; }
  .apps { margin-right: 9px; }
  h1 { font-size: 18px; line-height: 24px; white-space: nowrap; }
  h1 span { margin-left: 4px; }
  h1 span a { font-size: 17px; }
  .fav { margin-left: 12px; }
  .share { margin-left: 16px; }
  .tools { margin-left: auto; display: flex; gap: 8px; color: #8e8e9a; }
  .tool { box-sizing: border-box; width: 36px; height: 32px; border: 1px solid #24272d; border-radius: 2px; background: #181b1f; }
  .wide { width: 42px; }
  .slim { width: 34px; }
  .group { display: flex; }
  .group .tool + .tool { border-left: 0; }
  .group .narrow { width: 28px; }
  .range.tool { width: auto; padding: 0 9px; gap: 8px; font-weight: 500; }
  .range span { margin-right: 6px; white-space: nowrap; }

  .grid { display: grid; grid-template-columns: repeat(24, minmax(0, 1fr)); grid-auto-rows: 30px; gap: 8px; }
  .panel { position: relative; display: flex; flex-direction: column; min-width: 0; }
  h2 { font-size: 14px; font-weight: 500; line-height: 28px; text-align: center; white-space: nowrap; }
  .emissions { grid-area: 1 / 1 / span 11 / span 12; }
  .concentration { grid-area: 1 / 13 / span 6 / span 4; }
  .engine { grid-area: 1 / 17 / span 6 / span 4; }
  .coolant { grid-area: 1 / 21 / span 6 / span 4; }
  .battery { grid-area: 7 / 13 / span 5 / span 12; }
  .mode { grid-area: 12 / 1 / span 3 / span 4; }
  .status { grid-area: 15 / 1 / span 3 / span 4; }
  .mileage { grid-area: 12 / 5 / span 6 / span 3; }
  .pedal { grid-area: 12 / 8 / span 6 / span 5; }
  .speed { grid-area: 12 / 13 / span 6 / span 6; }
  .accel { grid-area: 12 / 19 / span 6 / span 6; }
  .location { grid-area: 18 / 1 / span 10 / span 24; }

  .chart { width: 100%; margin-top: 2px; }
  .chart text { fill: #ccccdc; font-size: 12px; }
  .plot { fill: #222b26; }
  .area { fill: #73bf69; fill-opacity: .08; }
  .gridline { stroke: #ccccdc; stroke-opacity: .12; fill: none; }
  .series { stroke: #73bf69; fill: none; shape-rendering: crispEdges; }
  .base { stroke-opacity: .8; }
  .legend { display: flex; align-items: center; gap: 8px; padding-left: 25px; font-size: 12px; line-height: 24px; }
  .legend i { width: 14px; height: 4px; border-radius: 1px; background: #73bf69; }

  .gauge { width: 100%; height: 180px; margin-top: 2px; }
  .gauge text { fill: #ccccdc; font-size: 12px; text-anchor: middle; }
  .dial { fill: none; stroke: #22252b; stroke-width: 22px; }
  .thin { stroke-width: 20px; }
  .filled { stroke: #37872d; }
  .ring { fill: none; stroke: #37872d; stroke-width: 3px; }
  .alert { stroke: #ff7383; }
  .gauge .reading { font-size: 35px; font-weight: 500; fill: #73bf69; }
  .gauge .hot { fill: #37872d; }

  .stat { padding: 15px 0 0 14px; font-weight: 500; white-space: nowrap; display: flex; flex-direction: column; gap: 6px; }
  .tall { padding-top: 34px; }
  .name { font-size: 23px; line-height: 28px; }
  .huge { font-size: 81px; line-height: 81px; font-weight: 500; }
  .huge small { font-size: 48px; }
  .large { font-size: 73px; line-height: 74px; font-weight: 500; }
  .large small { margin-left: 11px; font-size: 43px; }
  .medium { font-size: 63px; line-height: 63px; font-weight: 500; }
  .medium small { margin-left: 11px; font-size: 39px; }

  .bar { flex: 1; padding: 10px 18px 12px 9px; display: flex; align-items: center; }
  .cells { flex: 1; align-self: stretch; display: flex; gap: 2px; }
  .cells i { flex: 1; border-radius: 2px; }
  .lit { background-image: radial-gradient(ellipse at center, transparent 20%, rgba(17, 18, 23, .35)); }
  .bar p { width: 142px; padding-top: 6px; font-size: 39px; line-height: 44px; text-align: right; color: #9ac454; white-space: nowrap; }
  .bar small { font-size: 23px; }
  .resize { position: absolute; right: 3px; bottom: 6px; width: 4px; height: 4px; border-right: 1px solid #8e8e9a; border-bottom: 1px solid #8e8e9a; }

  .state { flex: 1; display: flex; align-items: center; justify-content: center; font-size: 30px; font-weight: 500; line-height: 36px; }
  .miles { align-items: center; font-size: 35px; }
  .miles small { margin-left: 6px; padding-top: 8px; font-size: 21px; }

  .spark { flex: 1; display: grid; align-items: start; padding-bottom: 4px; }
  .spark > * { grid-area: 1 / 1; min-width: 0; }
  .spark svg { width: 100%; align-self: end; }
  .speed-area { fill: #ccccdc; fill-opacity: .2; stroke: #ccccdc; stroke-width: 1px; stroke-opacity: .85; }
  .brake { stroke: #ccccdc; fill: none; shape-rendering: crispEdges; }
  .zero { stroke-opacity: .5; }

  .map { position: relative; flex: 1; min-height: 0; margin: 2px 0 4px; overflow: hidden; background: #0a0a0a; }
  .map > svg { width: 100%; height: 100%; }
  .map path { fill: none; stroke-linejoin: round; stroke-linecap: round; }
  .map .water { fill: #262626; }
  .map .land { fill: #0a0a0a; }
  .map .shade { fill: #070707; }
  .minor { stroke: #171717; }
  .river { stroke: #262626; }
  .map .dotted { stroke: #303030; stroke-dasharray: 1 3; }
  .casing { stroke: #1a1a1a; stroke-width: 4px; }
  .casing.big { stroke: #202020; stroke-width: 6px; }
  .road { stroke: #020202; stroke-width: 3px; }
  .road.big { stroke: #000; stroke-width: 4px; }
  .map text { font-family: "Open Sans", sans-serif; font-size: 13px; font-weight: 600; fill: #505050; stroke: #0c0c0c; stroke-width: 2px; paint-order: stroke; text-anchor: middle; }
  .map .city { font-size: 18px; font-weight: 700; }
  .drive { opacity: .92; }
  .zoom { position: absolute; left: 8px; top: 7px; padding: 3px; display: grid; gap: 1px; background: #1b1e23; border-radius: 4px; }
  .zoom button, .info button { width: 19px; height: 19px; background: #32353b; color: #ccccdc; font-size: 16px; font-weight: 700; line-height: 19px; border-radius: 2px; }
  .info { position: absolute; right: 8px; bottom: 7px; padding: 3px; background: #1b1e23; border-radius: 4px; }
  .info button { font-weight: 400; }
  .layers { position: absolute; left: 9px; bottom: 35px; box-sizing: border-box; width: 216px; height: 75px; padding: 8px; background: #22252b; border-bottom: 2px solid #464854; line-height: 20px; }
  .ramp { height: 10px; margin: 11px 0 0 10px; background: linear-gradient(to right, #1f60c4, #fff899, #c4162a); }
  .ends { display: flex; justify-content: space-between; margin-left: 10px; font-size: 12px; line-height: 18px; }
  .scale { position: absolute; left: 9px; bottom: 8px; box-sizing: border-box; width: 134px; height: 22px; padding: 3px; background: rgba(204, 204, 220, .06); border-radius: 4px; }
  .scale span { display: block; height: 14px; border: 1px solid #ccccdc; border-top: 0; font-size: 12px; line-height: 15px; text-align: center; }
</style>
